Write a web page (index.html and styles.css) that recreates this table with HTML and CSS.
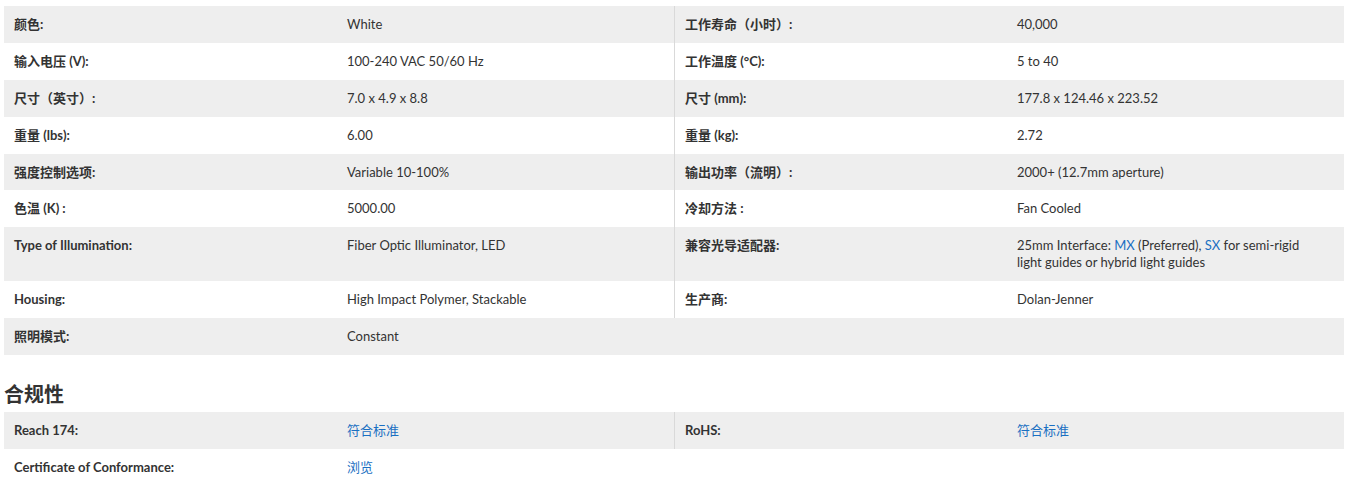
FILE: index.html
```html
<!DOCTYPE html>
<html lang="zh-CN">
<head>
<meta charset="utf-8">
<title>规格</title>
<link rel="stylesheet" href="styles.css">
</head>
<body>
<div class="page">
  <div class="specs">
    <div class="row alt">
      <div class="label">颜色:</div><div class="value">White</div>
      <div class="label split">工作寿命（小时）:</div><div class="value">40,000</div>
    </div>
    <div class="row">
      <div class="label">输入电压 (V):</div><div class="value">100-240 VAC 50/60 Hz</div>
      <div class="label split">工作温度 (°C):</div><div class="value">5 to 40</div>
    </div>
    <div class="row alt">
      <div class="label">尺寸（英寸）:</div><div class="value">7.0 x 4.9 x 8.8</div>
      <div class="label split">尺寸 (mm):</div><div class="value">177.8 x 124.46 x 223.52</div>
    </div>
    <div class="row">
      <div class="label">重量 (lbs):</div><div class="value">6.00</div>
      <div class="label split">重量 (kg):</div><div class="value">2.72</div>
    </div>
    <div class="row alt">
      <div class="label">强度控制选项:</div><div class="value">Variable 10-100%</div>
      <div class="label split">输出功率（流明）:</div><div class="value">2000+ (12.7mm aperture)</div>
    </div>
    <div class="row">
      <div class="label">色温 (K) :</div><div class="value">5000.00</div>
      <div class="label split">冷却方法 :</div><div class="value">Fan Cooled</div>
    </div>
    <div class="row alt">
      <div class="label">Type of Illumination:</div><div class="value">Fiber Optic Illuminator, LED</div>
      <div class="label split">兼容光导适配器:</div><div class="value narrow">25mm Interface: <a href="#">MX</a> (Preferred), <a href="#">SX</a> for semi-rigid light guides or hybrid light guides</div>
    </div>
    <div class="row">
      <div class="label">Housing:</div><div class="value">High Impact Polymer, Stackable</div>
      <div class="label split">生产商:</div><div class="value">Dolan-Jenner</div>
    </div>
    <div class="row alt">
      <div class="label">照明模式:</div><div class="value">Constant</div>
    </div>
  </div>

  <h2 class="heading">合规性</h2>

  <div class="specs">
    <div class="row alt">
      <div class="label">Reach 174:</div><div class="value"><a href="#">符合标准</a></div>
      <div class="label split">RoHS:</div><div class="value"><a href="#">符合标准</a></div>
    </div>
    <div class="row">
      <div class="label">Certificate of Conformance:</div><div class="value"><a href="#">浏览</a></div>
    </div>
  </div>
</div>
</body>
</html>
```

FILE: styles.css
```css
* { box-sizing: border-box; }

html, body {
  margin: 0;
  padding: 0;
  background: #fff;
}

body {
  font-family: "Lato", "Noto Sans CJK SC", sans-serif;
  font-size: 13px;
  color: #333;
}

.page {
  width: 1340px;
  margin: 6px 0 0 4px;
}

.row {
  display: grid;
  grid-template-columns: 333px 337px 333px 337px;
}

.row.alt {
  background: #eeeeee;
}

.label,
.value {
  padding: 10px 10px;
  line-height: 1.3;
}

.label {
  font-weight: 700;
}

.label.split {
  border-left: 1px solid #d9d9d9;
}

.value.narrow {
  padding-right: 30px;
}

.value a {
  color: #1a6fc2;
  text-decoration: none;
}

.heading {
  margin: 0;
  padding: 23px 0 0 0;
  height: 57px;
  font-size: 20px;
  line-height: 33px;
  font-weight: 700;
  color: #333;
}
```
